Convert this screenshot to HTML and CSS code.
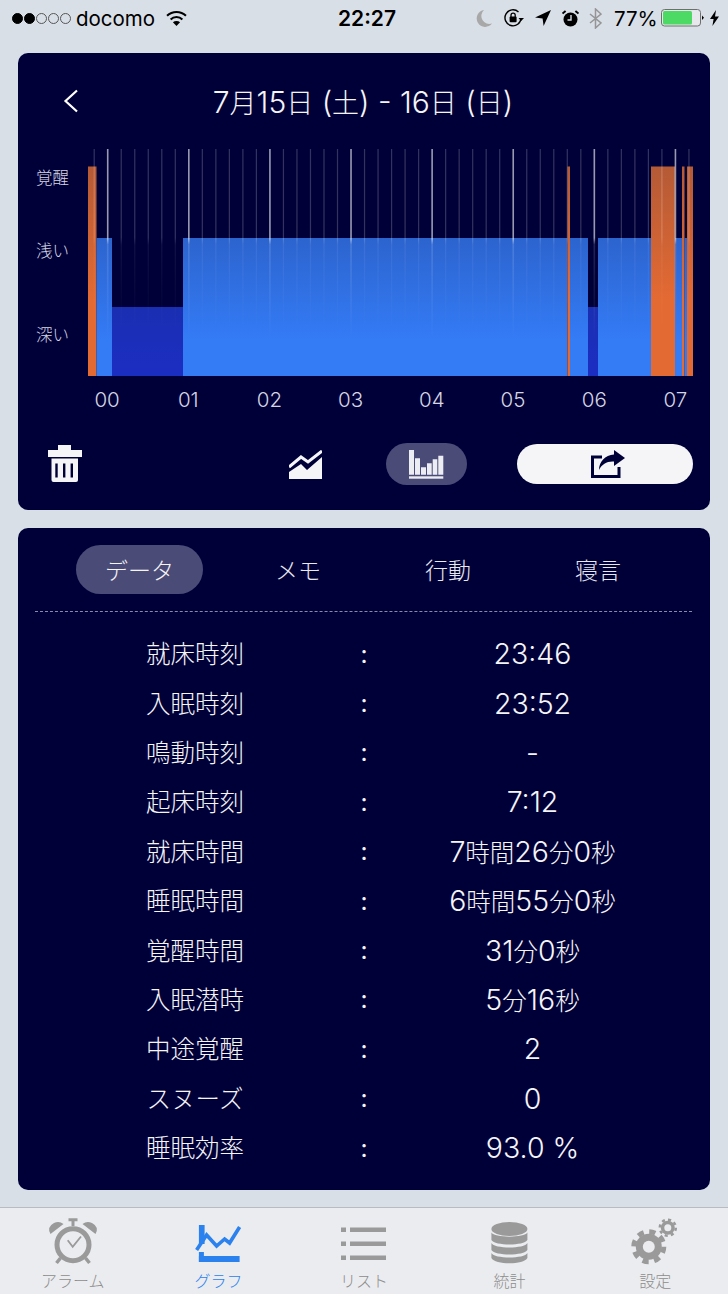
FILE: index.html
```html
<!DOCTYPE html>
<html lang="ja">
<head>
    <meta charset="UTF-8">
    <meta name="viewport" content="width=device-width, initial-scale=1.0">
    <title>睡眠グラフ</title>
    <link rel="stylesheet" href="styles.css">
</head>
<body>
    <div class="status">
        <div class="status-left">
            <span class="dots"><i class="dot on"></i><i class="dot on"></i><i class="dot"></i><i class="dot"></i><i class="dot"></i></span>
            <span class="carrier">docomo</span>
            <svg class="wifi" width="21" height="16" viewBox="0 0 20 15">
                <path d="M1 5.4A13 13 0 0 1 19 5.4" fill="none" stroke="#000" stroke-width="2"/>
                <path d="M4.4 8.9A8 8 0 0 1 15.6 8.9" fill="none" stroke="#000" stroke-width="2"/>
                <path d="M10 15L6.6 11.6A5 5 0 0 1 13.4 11.6Z"/>
            </svg>
        </div>
        <div class="clock">22:27</div>
        <div class="status-right">
            <svg class="st-moon" width="16" height="18" viewBox="0 0 16 18"><path d="M8 1A8.5 8.5 0 1 0 16 14.5A8 8 0 0 1 8 1Z" fill="#a8a8a8"/></svg>
            <svg class="st-lock" width="20" height="18" viewBox="0 0 20 18">
                <path d="M17 9A8 8 0 1 1 14.5 3" fill="none" stroke="#000" stroke-width="1.4"/>
                <path d="M14.5 9H20L17.2 12Z"/>
                <rect x="5.6" y="7.6" width="7" height="5.6" rx="1"/>
                <path d="M7 8V6.2a2.1 2.1 0 0 1 4.2 0V8" fill="none" stroke="#000" stroke-width="1.3"/>
            </svg>
            <svg class="st-arrow" width="16" height="16" viewBox="0 0 16 16"><path d="M16 0L0 7.6L7.6 8.4L8.6 16Z"/></svg>
            <svg class="st-alarm" width="17" height="17" viewBox="0 0 17 17">
                <circle cx="8.5" cy="9.5" r="7"/>
                <path d="M0.5 3.6L3.6 1M16.5 3.6L13.4 1" stroke="#000" stroke-width="2" fill="none"/>
                <path d="M9 5V10H5.5" stroke="#d9dfe7" stroke-width="1.4" fill="none"/>
            </svg>
            <svg class="st-bt" width="13" height="21" viewBox="0 0 13 21"><path d="M1 6L12 15L6.5 20V1L12 6L1 15" fill="none" stroke="#959595" stroke-width="1.5"/></svg>
            <span class="percent">77%</span>
            <svg class="st-batt" width="43" height="18" viewBox="0 0 43 18">
                <rect x="0.5" y="0.5" width="39" height="16.5" rx="3" fill="#e6e8ec" stroke="#6e6e6e"/>
                <rect x="2" y="2" width="29" height="13.5" rx="1.5" fill="#4cd964"/>
                <path d="M41 6.5L43 8.7L41 11Z"/>
            </svg>
            <svg class="st-bolt" width="9" height="16" viewBox="0 0 9 16"><path d="M6 0L0 9H3.6L2.4 16L9 6.4H5Z"/></svg>
        </div>
    </div>

    <div class="main">
        <section class="card card-graph">
            <div class="graph-head">
                <svg class="back" width="16" height="24" viewBox="0 0 16 24"><path d="M14 1.5L2.5 12L14 22.5" fill="none" stroke="#fff" stroke-width="2.2"/></svg>
                <h1 class="title">7<span class="cjk">月</span>15<span class="cjk">日</span> (<span class="cjk">土</span>) - 16<span class="cjk">日</span> (<span class="cjk">日</span>)</h1>
            </div>
            <div class="chart">
                <div class="levels">
                    <span class="level level-awake">覚醒</span>
                    <span class="level level-light">浅い</span>
                    <span class="level level-deep">深い</span>
                </div>
                <svg class="plot" id="plot" width="608" height="228" viewBox="88 149 608 228"></svg>
            </div>
            <div class="hours">
                <span>00</span><span>01</span><span>02</span><span>03</span><span>04</span><span>05</span><span>06</span><span>07</span>
            </div>
            <div class="tools">
                <svg class="tool-trash" width="34" height="38" viewBox="0 0 34 38">
                    <path d="M10 0H23V5H34V12H0V5H10Z" fill="#f5f5f7"/>
                    <path d="M3.5 13.500H30V35a2 2 0 0 1-2 2H5.500a2 2 0 0 1-2-2Z" fill="#f5f5f7"/>
                    <path d="M8.500 18.500V32.500M16.200 18.500V32.500M23.800 18.500V32.500" stroke="#000038" stroke-width="2.400"/>
                </svg>
                <svg class="tool-line" width="33" height="29" viewBox="0 0 33 29">
                    <path d="M0 17L12 7L19 12L33 1" fill="none" stroke="#f5f5f7" stroke-width="3"/>
                    <path d="M0 22L12 14L18 20L33 7V29H0Z" fill="#f5f5f7"/>
                </svg>
                <div class="tool-bars">
                    <svg width="35" height="29" viewBox="0 0 35 29">
                        <path d="M0 0H5V24.700H0ZM6 8.300H11V24.700H6ZM12 17.300H17V24.700H12ZM18 13.300H22.700V24.700H18ZM23.700 9.300H28.300V24.700H23.700ZM29.300 5.700H34.300V24.700H29.300Z" fill="#ecedf3"/>
                        <rect y="26.300" width="34.300" height="2.400" fill="#ecedf3"/>
                    </svg>
                </div>
                <div class="tool-share">
                    <svg width="34" height="29" viewBox="0 0 34 29">
                        <path d="M11 7H1.500V26.500H28V17" fill="none" stroke="#000038" stroke-width="3"/>
                        <path d="M23 0L34 8L23 16V11.500C16 11 11 14 8 20C8 12 14 5 23 4.500Z" fill="#000038"/>
                    </svg>
                </div>
            </div>
        </section>

        <section class="card card-data">
            <div class="tabs">
                <div class="tab tab-active">データ</div>
                <div class="tab">メモ</div>
                <div class="tab">行動</div>
                <div class="tab">寝言</div>
            </div>
            <div class="rows">
                <div class="row"><span class="key">就床時刻</span><span class="sep">:</span><span class="val">23:46</span></div>
                <div class="row"><span class="key">入眠時刻</span><span class="sep">:</span><span class="val">23:52</span></div>
                <div class="row"><span class="key">鳴動時刻</span><span class="sep">:</span><span class="val">-</span></div>
                <div class="row"><span class="key">起床時刻</span><span class="sep">:</span><span class="val">7:12</span></div>
                <div class="row"><span class="key">就床時間</span><span class="sep">:</span><span class="val">7<span class="cjk">時間</span>26<span class="cjk">分</span>0<span class="cjk">秒</span></span></div>
                <div class="row"><span class="key">睡眠時間</span><span class="sep">:</span><span class="val">6<span class="cjk">時間</span>55<span class="cjk">分</span>0<span class="cjk">秒</span></span></div>
                <div class="row"><span class="key">覚醒時間</span><span class="sep">:</span><span class="val">31<span class="cjk">分</span>0<span class="cjk">秒</span></span></div>
                <div class="row"><span class="key">入眠潜時</span><span class="sep">:</span><span class="val">5<span class="cjk">分</span>16<span class="cjk">秒</span></span></div>
                <div class="row"><span class="key">中途覚醒</span><span class="sep">:</span><span class="val">2</span></div>
                <div class="row"><span class="key">スヌーズ</span><span class="sep">:</span><span class="val">0</span></div>
                <div class="row"><span class="key">睡眠効率</span><span class="sep">:</span><span class="val">93.0 %</span></div>
            </div>
        </section>
    </div>

    <nav class="tabbar">
        <div class="nav-item">
            <svg width="60" height="48" viewBox="0 0 60 48">
                <circle cx="30" cy="26.700" r="16" fill="none" stroke="#9a9a9a" stroke-width="5"/>
                <path d="M25.500 1.800H34.500M30 2V8" stroke="#9a9a9a" stroke-width="3" fill="none"/>
                <path d="M7.500 16Q3.500 9 11 5Q16 2.500 20.500 6ZM52.500 16Q56.500 9 49 5Q44 2.500 39.500 6Z" fill="#9a9a9a"/>
                <path d="M17.500 40L13.500 45M42.500 40L46.500 45" stroke="#9a9a9a" stroke-width="3.500"/>
                <path d="M24.700 22.300L29.700 28.700L38 18.500" fill="none" stroke="#9a9a9a" stroke-width="1.800"/>
            </svg>
            <span class="nav-label">アラーム</span>
        </div>
        <div class="nav-item nav-active">
            <svg width="60" height="48" viewBox="0 0 60 48">
                <g transform="translate(7.600 7)" fill="#2b82ee">
                    <rect x="3.300" y="0" width="5.700" height="19"/>
                    <rect x="3.300" y="27" width="5" height="10"/>
                    <rect x="3.300" y="31" width="40.700" height="6"/>
                    <path d="M1 25L11 10L21 21L29 14L34 18L44 2" fill="none" stroke="#2b82ee" stroke-width="3.600"/>
                </g>
            </svg>
            <span class="nav-label">グラフ</span>
        </div>
        <div class="nav-item">
            <svg width="60" height="48" viewBox="0 0 60 48">
                <path d="M7 9.500H12V14H7ZM7 23.500H12V28H7ZM7 37.500H12V42H7ZM16 9.500H52V14H16ZM16 23.500H52V28H16ZM16 37.500H52V42H16Z" fill="#9a9a9a"/>
            </svg>
            <span class="nav-label">リスト</span>
        </div>
        <div class="nav-item">
            <svg width="60" height="48" viewBox="0 0 60 48">
                <ellipse cx="29.400" cy="11" rx="18" ry="7" fill="#9a9a9a"/>
                <path d="M11.400 14.500C14 20 44.800 20 47.400 14.500V22C44 28 14.800 28 11.400 22Z" fill="#9a9a9a"/>
                <path d="M11.400 25C14 31 44.800 31 47.400 25V32C44 38 14.800 38 11.400 32Z" fill="#9a9a9a"/>
                <path d="M11.400 35C14 41 44.800 41 47.400 35V40C44 47 14.800 47 11.400 40Z" fill="#9a9a9a"/>
            </svg>
            <span class="nav-label">統計</span>
        </div>
        <div class="nav-item">
            <svg width="60" height="48" viewBox="0 0 60 48">
                <circle cx="23.800" cy="28.700" r="13" fill="#9a9a9a"/>
                <circle cx="23.800" cy="28.700" r="15" fill="none" stroke="#9a9a9a" stroke-width="5" stroke-dasharray="6.200 5.580"/>
                <circle cx="23.800" cy="28.700" r="6" fill="#ebecef"/>
                <circle cx="42.800" cy="9.700" r="7" fill="#9a9a9a"/>
                <circle cx="42.800" cy="9.700" r="8" fill="none" stroke="#9a9a9a" stroke-width="2.500" stroke-dasharray="3.100 3.180"/>
                <circle cx="42.800" cy="9.700" r="3.500" fill="#ebecef"/>
            </svg>
            <span class="nav-label">設定</span>
        </div>
    </nav>

    <script src="chart.js"></script>
</body>
</html>
```

FILE: styles.css
```css
* {
    box-sizing: border-box;
}
html, body {
    margin: 0;
    padding: 0;
}
body {
    width: 728px;
    height: 1294px;
    overflow: hidden;
    background-color: #d9dfe7;
    font-family: Inter, "Noto Sans CJK JP", sans-serif;
    font-weight: 300;
    color: #f5f5f7;
}
svg {
    display: block;
    flex-shrink: 0;
}
.cjk {
    font-size: 24.5px;
}

/* status bar */
.status {
    height: 53px;
    padding-bottom: 17px;
    display: flex;
    align-items: center;
    color: #000;
}
.status-left {
    width: 338px;
    padding-left: 12px;
    display: flex;
    align-items: center;
}
.dots {
    display: flex;
    gap: 1px;
}
.dot {
    width: 11px;
    height: 11px;
    border: 1px solid #555;
    border-radius: 50%;
}
.dot.on {
    background-color: #000;
    border-color: #000;
}
.carrier {
    margin-left: 5px;
    font-size: 20.5px;
    font-weight: 400;
}
.wifi {
    margin-left: 11px;
}
.clock {
    width: 58px;
    text-align: center;
    font-size: 21px;
    font-weight: 600;
}
.status-right {
    flex: 1;
    padding-left: 80px;
    display: flex;
    align-items: center;
}
.st-lock {
    margin-left: 12px;
}
.st-arrow {
    margin-left: 11px;
}
.st-alarm {
    margin-left: 11px;
}
.st-bt {
    margin-left: 10px;
}
.percent {
    margin-left: 12px;
    width: 47px;
    font-size: 20.5px;
    font-weight: 400;
}
.st-bolt {
    margin-left: 6px;
}

/* cards */
.main {
    padding: 0 18px;
}
.card {
    background-color: #000038;
    border-radius: 10px;
}
.card-graph {
    height: 457px;
    padding-top: 28px;
}
.card-data {
    height: 662px;
    margin-top: 18px;
    padding: 17px 18px 0 17px;
}
.graph-head {
    height: 40px;
    display: flex;
    align-items: center;
    padding-left: 45px;
}
.title {
    margin: 0 0 0 118px;
    width: 332px;
    text-align: center;
    font-size: 30px;
    font-weight: 300;
    white-space: nowrap;
}
.title .cjk {
    font-size: 27px;
}

/* chart */
.chart {
    margin-top: 28px;
    display: flex;
}
.levels {
    width: 70px;
    padding: 17px 0 0 18px;
    display: flex;
    flex-direction: column;
    font-size: 16.5px;
    line-height: 24px;
    color: #d6d6e2;
}
.level-light {
    margin-top: 49px;
}
.level-deep {
    margin-top: 60px;
}
.hours {
    margin: 11px 0 0 48.5px;
    display: grid;
    grid-template-columns: repeat(8, 81.2px);
    text-align: center;
    font-size: 20.5px;
    line-height: 24px;
    color: #d6d6e2;
}

/* tool row */
.tools {
    margin-top: 31px;
    padding-left: 30px;
    height: 42px;
    display: flex;
    align-items: center;
}
.tool-line {
    margin-left: 207px;
}
.tool-bars {
    margin-left: 64px;
    width: 81px;
    height: 42px;
    border-radius: 21px;
    background-color: #4b4b78;
    display: flex;
    align-items: center;
    justify-content: center;
}
.tool-share {
    margin-left: 50px;
    width: 176px;
    height: 40px;
    padding-left: 6px;
    border-radius: 20px;
    background-color: #f5f5f7;
    display: flex;
    align-items: center;
    justify-content: center;
}

/* data card */
.tabs {
    height: 67px;
    padding: 0 0 17px 41px;
    display: flex;
    border-bottom: 1px dashed #8a8aa8;
    font-size: 23px;
}
.tab {
    width: 150px;
    padding-bottom: 2px;
    display: flex;
    align-items: center;
    justify-content: center;
    color: #e8e8f0;
}
.tab-active {
    width: 127px;
    margin-right: 20px;
    border-radius: 25px;
    background-color: #4b4b78;
    color: #f5f5f7;
}
.rows {
    margin-top: 17px;
}
.row {
    height: 49.4px;
    display: grid;
    grid-template-columns: 320px 18px 319px;
    align-items: center;
    text-align: center;
    font-size: 24.5px;
}
.key {
    padding-bottom: 2px;
}
.val {
    font-size: 28.5px;
    white-space: nowrap;
}
.sep {
    font-weight: 400;
}

/* bottom tab bar */
.tabbar {
    margin-top: 17px;
    height: 87px;
    padding-top: 10px;
    border-top: 1px solid #b8bcc0;
    background-color: #ebecef;
    display: grid;
    grid-template-columns: repeat(5, 1fr);
    overflow: hidden;
}
.nav-item {
    display: flex;
    flex-direction: column;
    align-items: center;
    color: #8d8d8d;
}
.nav-label {
    margin-top: 6px;
    font-size: 16px;
    line-height: 18px;
}
.nav-active {
    color: #2b82ee;
}
```

FILE: chart.js
```js
// sleep stages, [from x, to x, stage]
const stages = [
    [88, 96.5, "awake"], [96.5, 112, "light"], [112, 183, "deep"], [183, 567.5, "light"],
    [567.5, 570, "awake"], [570, 588, "light"], [588, 598, "deep"], [598, 651, "light"],
    [651, 675, "awake"], [675, 682, "light"], [682, 684.5, "awake"], [684.5, 687, "light"],
    [687, 693, "awake"]
];
const tops = { awake: 166.5, light: 238, deep: 307 };
const bottom = 376;
const NS = "http://www.w3.org/2000/svg";
const plot = document.getElementById("plot");

function el(name, attrs, parent) {
    const node = document.createElementNS(NS, name);
    for (const key in attrs) node.setAttribute(key, attrs[key]);
    (parent || plot).appendChild(node);
    return node;
}

function gradient(id, y1, y2, stops) {
    const g = el("linearGradient", { id, gradientUnits: "userSpaceOnUse", x1: 0, x2: 0, y1, y2 }, defs);
    stops.forEach(s => el("stop", { offset: s[0], "stop-color": s[1], "stop-opacity": s[2] }, g));
}

const defs = el("defs", {});
gradient("awake", 166, 300, [[0, "#b45a36", 1], [1, "#e46a33", 1]]);
gradient("light", 238, 340, [[0, "#2c64ce", 1], [1, "#347bf6", 1]]);
gradient("deep", 307, 376, [[0, "#1a2eb2", 1], [1, "#1b2ec2", 1]]);
gradient("minor", 149, 330, [[0, "#fff", 0.2], [0.49, "#fff", 0.2], [0.53, "#fff", 0.07], [1, "#fff", 0]]);
gradient("major", 149, 340, [[0, "#fff", 0.6], [0.465, "#fff", 0.6], [0.5, "#fff", 0.14], [1, "#fff", 0]]);

stages.forEach(s => {
    el("rect", { x: s[0], y: tops[s[2]], width: s[1] - s[0], height: bottom - tops[s[2]], fill: `url(#${s[2]})` });
});

// a tick every 10 minutes, the hour ones brighter
for (let i = 0; i < 45; i++) {
    const x = 94.2 + i * 13.517;
    const major = i % 6 === 1;
    el("rect", { x: x - (major ? 0.8 : 0.6), y: 149, width: major ? 1.6 : 1.2, height: 191, fill: `url(#${major ? "major" : "minor"})` });
}
```
